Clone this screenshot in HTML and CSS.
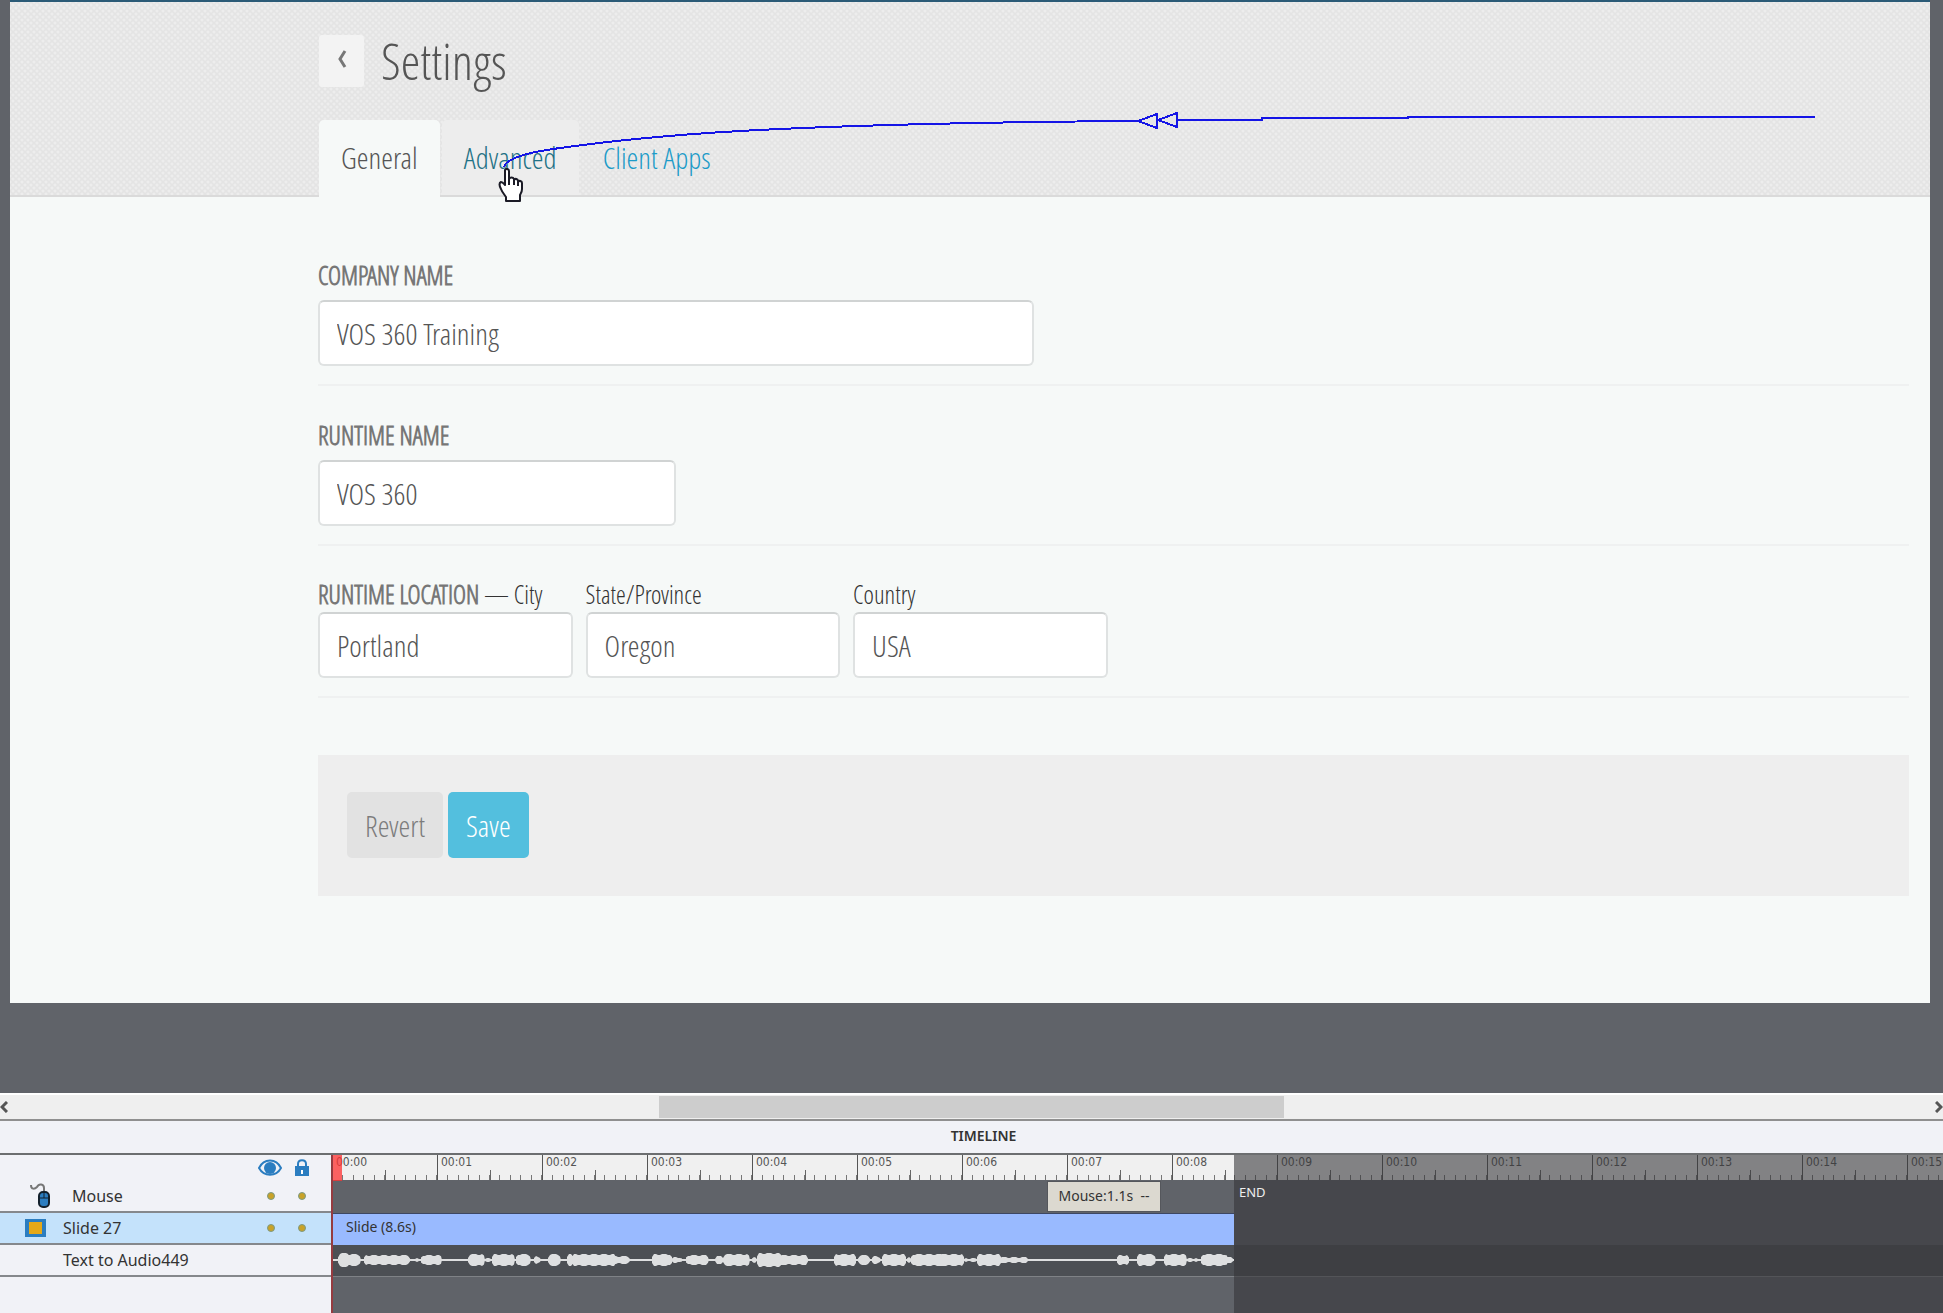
FILE: index.html
```html
<!DOCTYPE html>
<html lang="en">
<head>
    <meta charset="UTF-8">
    <meta name="viewport" content="width=device-width, initial-scale=1.0">
    <title>Settings - Slide 27</title>
    <link rel="stylesheet" href="styles.css">
</head>
<body>
    <main class="workspace">
        <div class="slide">
            <header class="slide-header">
                <div class="title-row">
                    <button class="back" type="button" aria-label="Back">
                        <svg width="10" height="18" viewBox="0 0 10 18"><path d="M8 1 L3 9 L8 17" fill="none" stroke="#777" stroke-width="3"/></svg>
                    </button>
                    <h1>Settings</h1>
                </div>
                <nav class="tabs">
                    <a class="tab active" href="#general">General</a>
                    <a class="tab hover" href="#advanced">Advanced</a>
                    <a class="tab" href="#apps">Client Apps</a>
                </nav>
            </header>

            <form class="settings">
                <div class="group first">
                    <label class="caption" for="company">COMPANY NAME</label>
                    <input class="wide" id="company" type="text" value="VOS 360 Training">
                </div>
                <div class="group">
                    <label class="caption" for="runtime">RUNTIME NAME</label>
                    <input class="half" id="runtime" type="text" value="VOS 360">
                </div>
                <div class="group location">
                    <div class="cell">
                        <label for="city"><span class="caption">RUNTIME LOCATION</span> — City</label>
                        <input id="city" type="text" value="Portland">
                    </div>
                    <div class="cell">
                        <label for="state">State/Province</label>
                        <input id="state" type="text" value="Oregon">
                    </div>
                    <div class="cell">
                        <label for="country">Country</label>
                        <input id="country" type="text" value="USA">
                    </div>
                </div>
                <div class="actions">
                    <button class="revert" type="button">Revert</button>
                    <button class="save" type="button">Save</button>
                </div>
            </form>

            <!-- recorded pointer path -->
            <svg class="mouse-path" width="1920" height="210" viewBox="10 0 1920 210">
                <g fill="none" stroke="#1414e6" stroke-width="2" shape-rendering="crispEdges">
                    <path d="M504 167 C506 158 530 152 560 148 C610 141 670 135 740 131 C850 125 980 122 1137 121 L1177 120 L1262 120 L1262 118 L1408 118 L1408 117 L1815 117"/>
                    <path d="M1138 121 L1157 114 L1157 128 Z" fill="#e6e6e6"/>
                    <path d="M1158 120 L1177 113 L1177 127 Z" fill="#e6e6e6"/>
                </g>
                <path d="M505 170 c1-2 4-1 4 1 v8 c1-2 4-2 5 0 v1 c1-2 4-1 4 1 v1 c1-2 4-1 4 1 v6 c0 3-1 4-2 6 v6 h-14 v-4 c-2-3-4-5-5-8 c-2-4-2-6 0-7 c2 0 3 2 4 3 z M509 179 v6 M514 180 v5 M518 182 v4" fill="#fff" stroke="#1b1b26" stroke-width="2" stroke-linejoin="round"/>
            </svg>
        </div>
    </main>

    <div class="scrollbar">
        <button type="button" aria-label="Scroll left"><svg width="8" height="12" viewBox="0 0 8 12"><path d="M7 1 L2 6 L7 11" fill="none" stroke="#555" stroke-width="3"/></svg></button>
        <div class="rail"><div class="thumb"></div></div>
        <button type="button" aria-label="Scroll right"><svg width="8" height="12" viewBox="0 0 8 12"><path d="M1 1 L6 6 L1 11" fill="none" stroke="#555" stroke-width="3"/></svg></button>
    </div>

    <section class="timeline">
        <h2>TIMELINE</h2>
        <div class="panel">
            <div class="layers">
                <div class="layer head">
                    <span class="name"></span>
                    <svg class="flag" width="24" height="18" viewBox="0 0 24 18"><path d="M1 9 C6 -1 18 -1 23 9 C18 18 6 18 1 9 Z" fill="#f1f2f7" stroke="#2b7dc0" stroke-width="2"/><circle cx="12" cy="9" r="6" fill="#2b7dc0"/></svg>
                    <svg class="flag" width="16" height="18" viewBox="0 0 16 18"><path d="M4 8 V5 C4 0 12 0 12 5 V8" fill="none" stroke="#2b7dc0" stroke-width="2"/><rect x="1" y="7" width="14" height="10" fill="#2b7dc0"/><rect x="7" y="11" width="2" height="4" fill="#fff"/></svg>
                </div>
                <div class="layer">
                    <svg class="icon mouse" width="20" height="26" viewBox="0 0 20 26"><path d="M1 2 C1 7 5 6 7 4 C9 0 14 1 14 5 V9" fill="none" stroke="#777" stroke-width="2"/><rect x="9" y="9" width="10" height="15" rx="4" fill="#2b7dc0" stroke="#13202c" stroke-width="2"/><path d="M9 15 H19 M14 9 V15" stroke="#13202c" stroke-width="1"/></svg>
                    <span class="name indent">Mouse</span>
                    <i class="dot"></i><i class="dot"></i>
                </div>
                <div class="layer selected">
                    <svg class="icon" width="21" height="18" viewBox="0 0 21 18"><rect width="21" height="18" fill="#2b7dc0"/><rect x="4" y="3" width="13" height="12" fill="#e6a817"/></svg>
                    <span class="name">Slide 27</span>
                    <i class="dot"></i><i class="dot"></i>
                </div>
                <div class="layer">
                    <span class="name">Text to Audio449</span>
                </div>
            </div>

            <div class="tracks">
                <div class="ruler">
                    <span>00:00</span><span>00:01</span><span>00:02</span><span>00:03</span>
                    <span>00:04</span><span>00:05</span><span>00:06</span><span>00:07</span>
                    <span>00:08</span><span>00:09</span><span>00:10</span><span>00:11</span>
                    <span>00:12</span><span>00:13</span><span>00:14</span><span>00:15</span>
                </div>
                <div class="track">
                    <div class="clip">Mouse:1.1s &nbsp;--</div>
                </div>
                <div class="track">
                    <div class="bar">Slide (8.6s)</div>
                </div>
                <div class="track audio">
                    <svg width="902" height="30" viewBox="332 0 902 30"><path id="wave" fill="#dedfe0"/></svg>
                </div>
                <div class="playhead"></div>
                <div class="end">END</div>
            </div>
        </div>
    </section>

    <script>
        // start, end and half height of every spoken burst
        const bursts = [
            [338, 350, 7], [346, 361, 6], [364, 410, 5], [413, 419, 2], [421, 442, 5],
            [468, 485, 6], [485, 491, 2], [492, 515, 6], [516, 531, 6], [534, 541, 4],
            [548, 561, 6], [567, 574, 6], [572, 616, 6], [600, 630, 4], [652, 672, 6],
            [672, 682, 3], [686, 709, 5], [715, 724, 4], [723, 750, 6], [752, 757, 3],
            [757, 782, 7], [770, 808, 5], [834, 856, 6], [858, 870, 5], [872, 881, 4],
            [882, 906, 6], [907, 911, 3], [911, 948, 6], [940, 964, 6], [964, 977, 2],
            [977, 1001, 6], [990, 1028, 3], [1107, 1117, 1], [1117, 1129, 5],
            [1137, 1156, 6], [1164, 1187, 6], [1187, 1194, 2], [1194, 1202, 2], [1201, 1228, 6], [1215, 1234, 3]
        ];

        let d = 'M332 14 H1234 V16 H332 Z';
        bursts.forEach(([from, to, h]) => {
            let top = '', bottom = '';
            for (let x = from; x <= to; x += 2) {
                const edge = Math.min(1, (x - from + 2) / 4, (to - x + 2) / 4);
                const size = Math.max(1, h * edge - (x * 7 % 5 < 2 ? 1 : 0));
                top += ` L${x} ${15 - size}`;
                bottom = ` L${x} ${15 + size}` + bottom;
            }
            d += ` M${from} 15${top} L${to} 15${bottom} Z`;
        });
        document.getElementById('wave').setAttribute('d', d);
    </script>
</body>
</html>
```
FILE: styles.css
```css
* { box-sizing: border-box; }
body {
    margin: 0;
    min-height: 100vh;
    display: flex;
    flex-direction: column;
    background: #606369;
    color: #333;
    font-family: "Noto Sans", sans-serif;
}
h1, h2 { margin: 0; font-weight: normal; }
button { border: none; padding: 0; font-family: inherit; cursor: pointer; }

/* slide */
.workspace { flex: 1; padding: 0 13px 0 10px; }
.slide {
    position: relative;
    padding-bottom: 107px;
    background: #f6f9f8;
    border-top: 2px solid #2b5a76;
    font-family: "Open Sans Condensed Light", "Open Sans Condensed", "Open Sans", sans-serif;
    font-weight: 300;
}
.slide-header {
    padding: 33px 0 0 309px;
    border-bottom: 2px solid #dadada;
    background-color: #e4e4e4;
    background-image: radial-gradient(#ededed 1px, transparent 2px), radial-gradient(#ededed 1px, transparent 2px);
    background-size: 6px 6px;
    background-position: 0 0, 3px 3px;
}
.title-row { display: flex; align-items: center; gap: 17px; height: 52px; }
.back {
    width: 45px;
    height: 52px;
    border-radius: 3px;
    background: #f3f3f3;
}
h1 { font-size: 50px; font-weight: 300; line-height: 52px; color: #555; }
.tabs { display: flex; gap: 2px; margin-top: 33px; }
.tab {
    height: 75px;
    padding: 0 22px;
    border-radius: 5px 5px 0 0;
    font-size: 30px;
    line-height: 76px;
    color: #1c9bc8;
    text-decoration: none;
}
.tab.active { margin-bottom: -2px; height: 77px; background: #f6f9f8; color: #555; }
.tab.hover { background: #ededed; color: #1f7286; }

.settings { padding: 0 21px 0 308px; }
.group { padding: 34px 0 18px; border-bottom: 2px solid #eff1f1; }
.group.first { padding-top: 63px; }
.group label { display: block; font-size: 25px; line-height: 30px; white-space: nowrap; }
.group .caption { color: #777; font-weight: 700; }
.group > input { margin-top: 10px; }
input {
    display: block;
    width: 100%;
    height: 66px;
    padding: 0 17px;
    border: 2px solid #dfe2e2;
    border-top-color: #d0d3d3;
    border-radius: 6px;
    background: #fff;
    color: #555;
    font-family: inherit;
    font-size: 30px;
    font-weight: 300;
}
.wide { width: 45%; }
.half { width: 22.5%; }
.group.location { display: flex; gap: 13px; padding-top: 33px; }
.cell { width: 16%; }
.cell input { margin-top: 3px; }
.actions {
    display: flex;
    gap: 5px;
    margin-top: 57px;
    padding: 37px 29px 38px;
    background: #eee;
}
.actions button {
    height: 66px;
    padding: 0 18px;
    border-radius: 5px;
    font-size: 30px;
    font-weight: 300;
}
.actions .revert { background: #e2e2e2; color: #7c7c7c; }
.actions .save { background: #53bfde; color: #fff; }
.mouse-path { position: absolute; top: -2px; left: 0; pointer-events: none; }

/* scrollbar */
.scrollbar {
    display: flex;
    align-items: center;
    height: 28px;
    background: #efefef;
    border-top: 2px solid #fff;
    border-bottom: 2px solid #8f8f8f;
}
.scrollbar button { width: 8px; height: 24px; background: none; line-height: 0; }
.rail { flex: 1; height: 22px; }
.thumb { width: 32.4%; height: 22px; margin-left: 33.8%; background: #cdcdcd; }

/* timeline */
.timeline h2 {
    padding-left: 24px;
    height: 34px;
    border-bottom: 2px solid #6c6e70;
    background: #f1f2f7;
    font-size: 14px;
    font-weight: 600;
    line-height: 30px;
    text-align: center;
}
.panel { display: flex; height: 158px; }
.layers { flex: none; width: 331px; background: #f1f2f7; }
.layer {
    display: flex;
    align-items: center;
    height: 32px;
    padding: 0 25px;
    border-bottom: 2px solid #85888c;
    font-size: 16px;
}
.layer.head { height: 26px; padding: 0 21px; gap: 12px; border: none; }
.layer.selected { background: #c4e2fb; }
.icon { flex: none; }
.icon.mouse { margin-left: 5px; }
.name { flex: 1; padding-left: 17px; }
.name.indent { padding-left: 22px; }
.layer > .name:first-child { padding-left: 38px; }
.dot {
    width: 8px;
    height: 8px;
    margin-left: 23px;
    border: 1px solid #7b9a86;
    border-radius: 50%;
    background: #c9a227;
}

.tracks { position: relative; flex: 1; min-width: 0; overflow-x: clip; background: #606369; }
.ruler {
    display: flex;
    height: 26px;
    padding-left: 1px;
    background: #f0f0f0;
    border-bottom: 1px solid #606369;
}
.ruler span {
    flex: none;
    width: 105px;
    padding-left: 3px;
    border-left: 1px solid #555;
    background:
        linear-gradient(#666, #666) 50% 100% / 1px 10px no-repeat,
        repeating-linear-gradient(90deg, transparent 0 calc(10% - 1px), #777 calc(10% - 1px) 10%) 0 100% / 100% 5px no-repeat;
    color: #555;
    font-family: "DejaVu Sans Condensed", "DejaVu Sans", sans-serif;
    font-size: 12px;
    line-height: 14px;
}
.track { height: 32px; padding-left: 2px; }
.clip {
    width: 114px;
    height: 31px;
    margin-left: 714px;
    border: 1px solid #55575c;
    background: #dcd9d0;
    font-size: 14px;
    line-height: 28px;
    text-align: center;
}
.bar {
    width: 901px;
    height: 32px;
    padding-left: 13px;
    border-top: 1px solid #3d4763;
    background: #99baff;
    font-size: 14px;
    line-height: 25px;
}
.track.audio { padding: 0 0 0 1px; background: #4c4f54; border-bottom: 1px solid #7f8286; }
.track svg { display: block; }
.playhead {
    position: absolute;
    top: 0;
    bottom: 0;
    left: 0;
    border-left: 2px solid #963b40;
}
.playhead::after {
    content: "";
    display: block;
    width: 9px;
    height: 26px;
    background: rgba(255, 50, 50, 0.75);
}
.end {
    position: absolute;
    top: 0;
    bottom: 0;
    left: 903px;
    right: 0;
    padding: 28px 0 0 5px;
    background: rgba(52, 52, 56, 0.59);
    color: #eee;
    font-size: 13px;
    line-height: 18px;
}
```
